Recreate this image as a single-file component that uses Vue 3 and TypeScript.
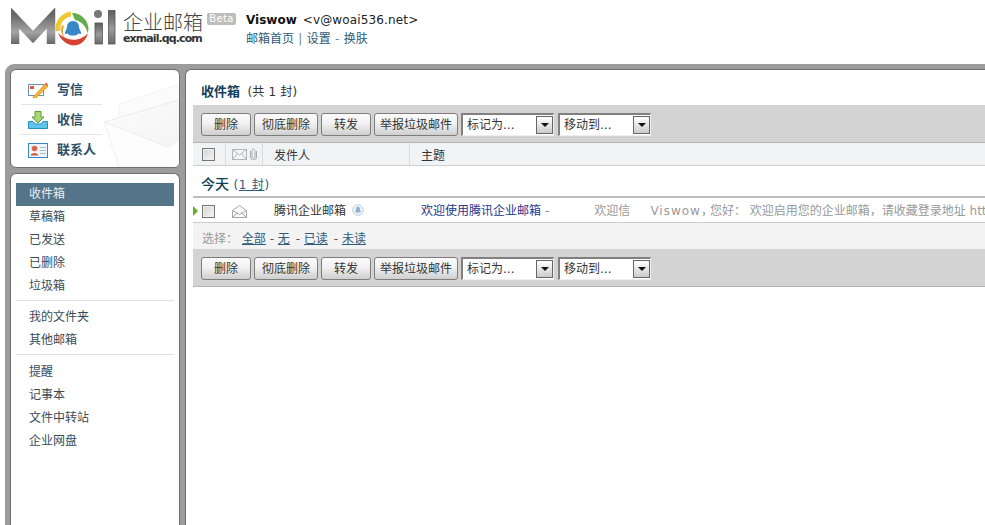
<script setup lang="ts">
interface Btn { label: string; size: string }
const buttons: Btn[] = [
  { label: '删除', size: 'w50' },
  { label: '彻底删除', size: 'w64' },
  { label: '转发', size: 'w50' },
  { label: '举报垃圾邮件', size: 'w84' },
]
const selects: string[] = ['标记为...', '移动到...']
const toolbars: string[] = ['top', 'bottom']
const groups: string[][] = [
  ['草稿箱', '已发送', '已删除', '垃圾箱'],
  ['我的文件夹', '其他邮箱'],
  ['提醒', '记事本', '文件中转站', '企业网盘'],
]
</script>

<template>
  <div class="page">
    <header class="top">
      <div class="logo">
        <svg width="106" height="42" viewBox="11 8 106 42" aria-hidden="true">
          <defs>
            <linearGradient id="lg" x1="0" y1="0" x2="0" y2="1">
              <stop offset="0" stop-color="#5e5e5e" />
              <stop offset="0.55" stop-color="#9a9a9a" />
              <stop offset="1" stop-color="#6a6a6a" />
            </linearGradient>
            <linearGradient id="lg2" gradientUnits="userSpaceOnUse" x1="11" y1="14" x2="11" y2="44">
              <stop offset="0" stop-color="#666" />
              <stop offset="0.6" stop-color="#a4a4a4" />
              <stop offset="1" stop-color="#666" />
            </linearGradient>
          </defs>
          <polyline points="15,44 15,18 33,37 51,18 51,44" fill="none" stroke="url(#lg2)" stroke-width="8.500" stroke-linejoin="miter" />
          <circle cx="73" cy="29" r="17.5" fill="#fff" />
          <path d="M58 31 A15 15 0 0 1 71 14" fill="none" stroke="#eec933" stroke-width="5" />
          <path d="M72 13 C80 12.500 88.500 20 88.500 29 C88.500 31 87.500 33 87.500 33 C86 25 80 21 75 20 Z" fill="#63ad4f" />
          <path d="M58 33 C62 43 72 48 80 44 C84 42 87 37 88 33 C84 38 76 41.500 68 39 C63 37 60 35 58 33 Z" fill="#d8402f" />
          <path d="M62 25 C60 30 61 35 66 39 C63 36 62 31 64 26 Z" fill="#f0a23a" />
          <path d="M73 21 C69 21 67 24 67 27 C67 29 65 31 65 33 C65 35 67 34 67.5 33 C68 35 70 35.500 73 35.500 C76 35.500 78 35 78.500 33 C79 34 81 35 81 33 C81 31 79 29 79 27 C79 24 77 21 73 21 Z" fill="#3a87c8" />
          <rect x="95" y="23" width="7.500" height="21" fill="url(#lg)" stroke="#555" stroke-width="0.800" />
          <circle cx="98" cy="14" r="4" fill="#777" />
          <rect x="108.500" y="10.500" width="6.500" height="33.500" fill="url(#lg)" stroke="#555" stroke-width="0.800" />
        </svg>
      </div>
      <div class="brand">
        <div class="brand-name">企业邮箱</div>
        <div class="brand-url">exmail.qq.com</div>
      </div>
      <div class="beta">Beta</div>
      <div class="user">
        <div class="user-line"><b>Viswow</b> &lt;v@woai536.net&gt;</div>
        <div class="user-links"><a>邮箱首页</a> | <a>设置</a> - <a>换肤</a></div>
      </div>
    </header>

    <div class="frame">
      <aside class="side">
        <nav class="quick">
          <svg class="envelope" width="78" height="84" viewBox="0 -12 78 84" aria-hidden="true">
            <defs>
              <linearGradient id="env" x1="0" y1="0" x2="1" y2="1">
                <stop offset="0" stop-color="#fdfdfd" />
                <stop offset="1" stop-color="#f4f4f4" />
              </linearGradient>
            </defs>
            <path d="M18 9 L78 -11 L78 30 L18 30 Z" fill="#fbfbfb" stroke="#f4f4f4" />
            <path d="M3 27 L78 5 L78 44 L70 51 Q68 53 64 51 Z" fill="url(#env)" stroke="#ebebeb" />
            <path d="M3 27 L18 72 L78 72 L78 44 L70 51 Q68 53 64 51 Z" fill="#fdfdfd" stroke="#f0f0f0" />
          </svg>
          <a class="quick-item">
            <svg width="20" height="16" viewBox="0 0 20 16" aria-hidden="true">
              <rect x="0.500" y="2.500" width="15" height="11" fill="#fff" stroke="#6d92ad" />
              <rect x="2" y="4" width="4" height="3" fill="#e4553c" />
              <path d="M5 15 L17 2 L20 4.500 L8 16 L5 16 Z" fill="#f2b32f" stroke="#c98a1d" stroke-width="0.500" />
              <path d="M16.500 2 L18 0.500 L20 2.500 L19.500 4.500 Z" fill="#e0604a" />
            </svg>
            <span>写信</span>
          </a>
          <a class="quick-item">
            <svg width="20" height="18" viewBox="0 0 20 18" aria-hidden="true">
              <path d="M0.500 10.500 H5 L7 13 H13 L15 10.500 H19.500 V17.500 H0.500 Z" fill="#5cc5ea" stroke="#2a8fc0" />
              <path d="M7 0.500 H13 V6 H16 L10 12 L4 6 H7 Z" fill="#a6d67a" stroke="#5a9e35" />
            </svg>
            <span>收信</span>
          </a>
          <a class="quick-item">
            <svg width="20" height="15" viewBox="0 0 20 15" aria-hidden="true">
              <rect x="0.500" y="0.500" width="19" height="14" fill="#eef6fc" stroke="#3a86c0" />
              <circle cx="6.500" cy="5.500" r="2.800" fill="#d9683f" />
              <path d="M2.500 12.500 C3 9 10 9 10.500 12.500 Z" fill="#c85a40" />
              <path d="M12 4.500 H18 M12 7.500 H18 M12 10.500 H18" stroke="#a7bccb" />
            </svg>
            <span>联系人</span>
          </a>
        </nav>

        <nav class="folders">
          <a class="folder current">收件箱</a>
          <div v-for="(group, i) in groups" :key="i" class="group">
            <a v-for="name in group" :key="name" class="folder">{{ name }}</a>
          </div>
        </nav>
      </aside>

      <main class="content">
        <h1 class="title">收件箱 <span>(共 1 封)</span></h1>

        <template v-for="(bar, n) in toolbars" :key="bar">
          <div class="toolbar" :class="bar">
            <button v-for="b in buttons" :key="b.label" class="btn" :class="b.size" type="button">{{ b.label }}</button>
            <div v-for="s in selects" :key="s" class="select">
              <span>{{ s }}</span>
              <i class="arrow"></i>
            </div>
          </div>

          <template v-if="n === 0">
            <div class="head">
              <span class="c-check"><i class="box"></i></span>
              <span class="c-icons">
                <svg width="15" height="11" viewBox="0 0 15 11" aria-hidden="true">
                  <rect x="0.500" y="0.500" width="14" height="10" fill="#f4f5f6" stroke="#b5b5b5" />
                  <path d="M0.500 0.500 L7.500 6 L14.500 0.500 M0.500 10.500 L5.500 4.500 M14.500 10.500 L9.500 4.500" fill="none" stroke="#b5b5b5" />
                </svg>
                <svg width="7" height="12" viewBox="0 0 7 12" aria-hidden="true">
                  <path d="M5 3 V8.500 A1.500 1.500 0 0 1 2 8.500 V2.500 A1.500 1.500 0 0 1 5 2.500 M6.500 3 V9 A3 3 0 0 1 0.500 9 V3" fill="none" stroke="#aaa" />
                </svg>
              </span>
              <span class="c-from"><span class="label">发件人</span></span>
              <span class="c-subject"><span class="label">主题</span></span>
            </div>

            <div class="day">今天 <span>(<u>1 封</u>)</span></div>

            <div class="row">
              <i class="pointer"></i>
              <span class="r-check"><i class="box"></i></span>
              <span class="r-icon">
                <svg width="15" height="13" viewBox="0 0 15 13" aria-hidden="true">
                  <path d="M0.500 5.500 L7.500 0.500 L14.500 5.500 V12.500 H0.500 Z" fill="#fafafa" stroke="#a8a8a8" />
                  <path d="M0.500 5.500 L7.500 9.500 L14.500 5.500 M0.500 12.500 L5.500 7.500 M14.500 12.500 L9.500 7.500" fill="none" stroke="#a8a8a8" />
                </svg>
              </span>
              <span class="r-from">腾讯企业邮箱</span>
              <svg class="r-badge" width="12" height="12" viewBox="0 0 12 12" aria-hidden="true">
                <circle cx="6" cy="6" r="5.300" fill="#eef4fa" stroke="#bcd0e2" />
                <path d="M6 2.500 C4.500 2.500 4 3.800 4 5 C4 6 3 7 3.200 8 C3.500 8.500 4 8 4.200 7.700 C4.500 8.500 5 8.700 6 8.700 C7 8.700 7.500 8.500 7.800 7.700 C8 8 8.500 8.500 8.800 8 C9 7 8 6 8 5 C8 3.800 7.500 2.500 6 2.500 Z" fill="#8fb3d3" />
              </svg>
              <span class="r-subject">欢迎使用腾讯企业邮箱</span>
              <span class="r-dash">-</span>
              <span class="r-tag">欢迎信</span>
              <span class="r-body"><span class="r-name">Viswow</span><span class="r-comma">，</span>您好： 欢迎启用您的企业邮箱，请收藏登录地址 http://exmail.qq.com</span>
            </div>

            <div class="picker">
              选择： <u>全部</u> <em>-</em> <u>无</u> <em>-</em> <u>已读</u> <em>-</em> <u>未读</u>
            </div>
          </template>
        </template>
      </main>
    </div>
  </div>
</template>

<style>
html, body { margin: 0; background: #fff; overflow: hidden; }
</style>

<style scoped>
.page {
  width: 985px;
  height: 525px;
  overflow: hidden;
  font: 12px/1.2 "DejaVu Sans", "Noto Sans CJK SC", sans-serif;
  color: #333;
  background: #fff;
}

.top {
  height: 64px;
  display: flex;
  align-items: flex-start;
  box-sizing: border-box;
  padding-left: 11px;
}
.logo { width: 112px; height: 50px; padding-top: 8px; box-sizing: border-box; }
.logo svg { display: block; }
.brand { width: 84px; padding-top: 10px; }
.brand-name {
  font: 300 20px/23px "Noto Sans CJK SC", sans-serif;
  color: #444;
}
.brand-url {
  font: 700 11px/11px "DejaVu Sans", sans-serif;
  letter-spacing: -0.9px;
  color: #333;
}
.beta {
  margin-top: 13px;
  width: 29px;
  height: 12px;
  background: #bdbdbd;
  color: #fff;
  border-radius: 2px;
  font: 10px/12px "DejaVu Sans", sans-serif;
  letter-spacing: 0.3px;
  text-align: center;
}
.user { margin-left: 10px; padding-top: 13px; }
.user-line { line-height: 15px; color: #222; font-size: 12px; letter-spacing: 0.15px; }
.user-line b { font-weight: 700; color: #111; margin-right: 2px; letter-spacing: 0; }
.user-links { margin-top: 3px; line-height: 16px; color: #6a8799; word-spacing: 0.5px; }
.user-links a { color: #2d5a78; }

.frame {
  height: 461px;
  margin-left: 5px;
  box-sizing: border-box;
  padding: 5px 0 0 5px;
  display: grid;
  grid-template-columns: 170px 1fr;
  column-gap: 5px;
  background: #9c9c9c;
  border-radius: 9px 0 0 0;
}

.side { display: flex; flex-direction: column; gap: 5px; min-height: 0; }
.quick, .folders, .content {
  background: #fff;
  border: 1px solid #6e6e6e;
  border-radius: 6px 6px 0 0;
  box-sizing: border-box;
}
.quick {
  position: relative;
  height: 99px;
  border-radius: 6px;
  padding: 5px 0 0 10px;
  overflow: hidden;
}
.envelope { position: absolute; right: 0; bottom: 0; }
.quick-item {
  position: relative;
  display: flex;
  align-items: center;
  width: 81px;
  height: 30px;
  border-bottom: 1px solid #e3e6e8;
  box-sizing: border-box;
  font-weight: 700;
  font-size: 13px;
  color: #2c5069;
}
.quick-item:last-of-type { border-bottom: 0; }
.quick-item svg { margin-left: 7px; flex: none; }
.quick-item span { position: absolute; left: 36px; }

.folders { flex: 1; padding: 9px 5px 0; border-bottom: 0; }
.folder {
  display: block;
  height: 23px;
  line-height: 23px;
  padding-left: 13px;
  color: #3a4a55;
}
.folder.current { background: #54748a; color: #e8eef2; }
.group { border-bottom: 1px solid #dde1e4; padding-bottom: 2px; margin-bottom: 5px; }
.group:nth-of-type(2) { margin-bottom: 6px; }
.group:last-child { border-bottom: 0; }

.content {
  border-right: 0;
  border-bottom: 0;
  border-radius: 6px 0 0 0;
  padding-left: 7px;
  overflow: hidden;
  min-width: 0;
}
.title {
  margin: 0;
  height: 35px;
  padding: 14px 0 0 8px;
  box-sizing: border-box;
  font-size: 13px;
  line-height: 16px;
  font-weight: 700;
  color: #123f5a;
}
.title span { font-size: 12px; font-weight: 400; color: #333; margin-left: 3px; letter-spacing: 0.15px; }

.toolbar {
  height: 38px;
  box-sizing: border-box;
  display: flex;
  align-items: center;
  gap: 3px;
  padding: 2px 0 0 8px;
  background: #d3d3d3;
}
.toolbar.top { border-bottom: 1px solid #b5b5b5; }
.toolbar.bottom { border-bottom: 1px solid #b5b5b5; }
.btn {
  height: 23px;
  padding: 0;
  border: 1px solid #7d7d7d;
  border-radius: 3px;
  background: linear-gradient(#fbfbfb, #f1f1f1 45%, #cfcfcf);
  font: 12px/20px "DejaVu Sans", "Noto Sans CJK SC", sans-serif;
  color: #333;
  box-sizing: border-box;
}
.w50 { width: 50px; }
.w64 { width: 64px; }
.w84 { width: 84px; }
.select {
  position: relative;
  width: 93px;
  height: 23px;
  box-sizing: border-box;
  background: #fff;
  border-top: 2px solid #808080;
  border-left: 2px solid #808080;
  border-right: 1px solid #eee;
  border-bottom: 1px solid #eee;
  line-height: 20px;
  padding-left: 4px;
  color: #333;
}
.select + .select { margin-left: 1px; }
.arrow {
  position: absolute;
  right: 0;
  top: 1px;
  width: 17px;
  height: 18px;
  box-sizing: border-box;
  border: 1px solid #666;
  background: linear-gradient(#fff, #ccc);
}
.arrow::after {
  content: "";
  position: absolute;
  left: 4px;
  top: 6px;
  border-left: 4px solid transparent;
  border-right: 4px solid transparent;
  border-top: 4px solid #111;
}

.head {
  height: 23px;
  box-sizing: border-box;
  display: flex;
  align-items: stretch;
  background: #f2f3f5;
  border-bottom: 1px solid #cfcfcf;
  line-height: 22px;
  color: #333;
}
.head > span { display: flex; align-items: center; box-sizing: border-box; border-right: 1px solid #d9d9d9; }
.head .label { padding-top: 3px; line-height: 18px; }
.c-check { width: 33px; padding-left: 9px; }
.c-icons { width: 37px; padding-left: 6px; gap: 3px; }
.c-from { width: 147px; padding-left: 11px; }
.head > .c-subject { flex: 1; padding-left: 11px; border-right: 0; }
.box {
  display: block;
  width: 13px;
  height: 13px;
  box-sizing: border-box;
  border: 1px solid #777;
  background: linear-gradient(135deg, #d5d5d5, #f5f5f5);
  box-shadow: inset 0 0 0 1px #ededed;
}

.day {
  height: 32px;
  box-sizing: border-box;
  padding: 10px 0 0 8px;
  border-bottom: 2px solid #bdbdbd;
  font-size: 14px;
  line-height: 16px;
  color: #123f5a;
  font-weight: 500;
}
.day span { font-size: 12px; font-weight: 400; color: #2d5a78; letter-spacing: 0.7px; }

.row {
  position: relative;
  height: 25px;
  padding-top: 2px;
  box-sizing: border-box;
  display: flex;
  align-items: center;
  white-space: nowrap;
  border-bottom: 1px solid #ccc;
  overflow: hidden;
}
.pointer {
  flex: none;
  width: 0;
  height: 0;
  margin-right: 4px;
  border-left: 5px solid #67ab2b;
  border-top: 5px solid transparent;
  border-bottom: 5px solid transparent;
}
.r-check { flex: none; width: 30px; }
.r-icon { flex: none; width: 42px; display: flex; }
.r-from { flex: none; width: 78px; color: #333; }
.r-badge { flex: none; margin: -3px 0 0 0; }
.r-subject { flex: none; margin-left: 57px; color: #26358e; }
.r-dash { flex: none; margin-left: 4px; color: #888; }
.r-tag { flex: none; margin-left: 45px; color: #999; }
.r-body { flex: none; margin-left: 20px; color: #999; }
.r-name { letter-spacing: 1px; }
.r-comma { letter-spacing: -3px; }
.r-body, .r-tag { font-size: 12px; }

.picker {
  height: 26px;
  box-sizing: border-box;
  padding-left: 9px;
  line-height: 32px;
  background: #f3f3f3;
  color: #999;
  overflow: hidden;
}
.picker u { color: #2d5a78; }
.picker em { font-style: normal; color: #555; }
.picker em ~ em { margin-left: 2px; }
</style>
